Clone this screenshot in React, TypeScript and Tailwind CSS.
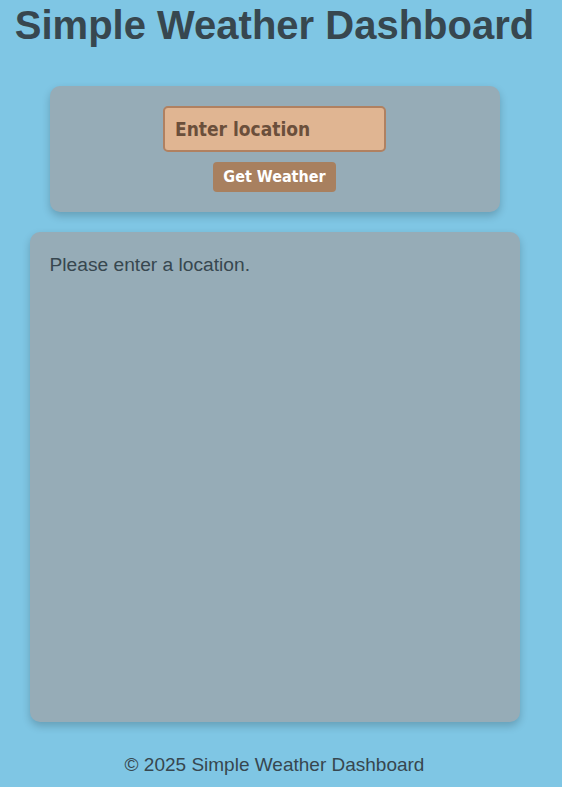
export default function App() {
  return (
    <div className="min-h-[787px] bg-[#7fc6e4] font-['Liberation_Sans',Arial,sans-serif] text-[#37474f]">
      <div className="flex w-[549px] flex-col items-center">
        <h1 className="h-[51px] text-center text-[40px] font-bold leading-[51px]">
          Simple Weather Dashboard
        </h1>

        <div className="mt-[35px] flex w-[450px] flex-col items-center gap-[10px] rounded-[10px] bg-[#96acb7] p-5 shadow-[0_4px_8px_rgba(0,0,0,0.2)]">
          <input
            className="h-[46px] w-[223px] rounded-[5px] border-2 border-[#b08161] bg-[#e0b592] px-[10px] font-['DejaVu_Sans_Condensed','DejaVu_Sans',sans-serif] text-[19px] font-bold text-[#6b4f3b] outline-none placeholder:text-[#6b4f3b]"
            placeholder="Enter location"
            type="text"
          />
          <button
            className="h-[30px] rounded-[4px] bg-[#a8805f] px-[10px] font-['DejaVu_Sans_Condensed','DejaVu_Sans',sans-serif] text-[16px] font-bold text-white"
            type="button"
          >
            Get Weather
          </button>
        </div>

        <div className="mt-5 h-[490px] w-[490px] rounded-[10px] bg-[#96acb7] p-5 shadow-[0_4px_8px_rgba(0,0,0,0.2)]">
          <p className="text-[19.2px] leading-[26px]">Please enter a location.</p>
        </div>

        <footer className="mt-[32px] text-center text-[19px] leading-[22px]">
          © 2025 Simple Weather Dashboard
        </footer>
      </div>
    </div>
  );
}
